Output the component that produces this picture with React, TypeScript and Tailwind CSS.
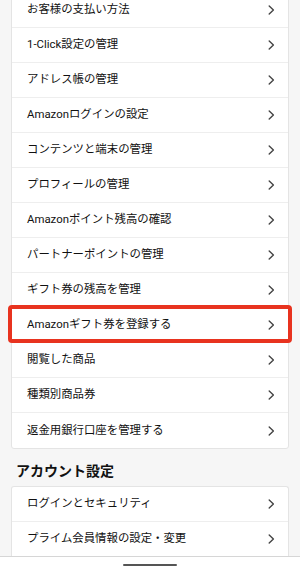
import React from "react";

const Chevron = () => (
  <svg width="7" height="10" viewBox="0 0 7 10" fill="none" className="shrink-0">
    <path d="M1.2 1 L5.4 5 L1.2 9" stroke="#444" strokeWidth="1.4" strokeLinecap="round" strokeLinejoin="round" />
  </svg>
);

const Row = ({ label, last }: { label: string; last?: boolean }) => (
  <div className={"flex h-[35px] items-center justify-between pl-[15px] pr-[13px] " + (last ? "" : "border-b border-[#eeeeee]")}>
    <span className="text-[11.4px] leading-none text-[#111111]">{label}</span>
    <Chevron />
  </div>
);

const items1 = [
  "お客様の支払い方法",
  "1-Click設定の管理",
  "アドレス帳の管理",
  "Amazonログインの設定",
  "コンテンツと端末の管理",
  "プロフィールの管理",
  "Amazonポイント残高の確認",
  "パートナーポイントの管理",
  "ギフト券の残高を管理",
  "Amazonギフト券を登録する",
  "閲覧した商品",
  "種類別商品券",
  "返金用銀行口座を管理する",
];

const items2 = ["ログインとセキュリティ", "プライム会員情報の設定・変更"];

export default function App() {
  return (
    <div
      className="relative h-[570px] w-[300px] overflow-hidden bg-[#f6f6f6]"
      style={{ fontFamily: 'Roboto, "Noto Sans CJK JP", sans-serif' }}
    >
      <div className="mx-[11px] -mt-[8px] overflow-hidden rounded-[3px] border border-[#e4e4e4] bg-white">
        {items1.map((t, i) => (
          <Row key={t} label={t} last={i === items1.length - 1} />
        ))}
      </div>
      <div className="flex h-[37px] items-center pl-[16px] pt-[6px]">
        <span className="text-[14px] font-bold leading-none text-[#111111]">アカウント設定</span>
      </div>
      <div className="mx-[11px] overflow-hidden rounded-t-[3px] border border-b-0 border-[#e4e4e4] bg-white">
        {items2.map((t) => (
          <Row key={t} label={t} />
        ))}
      </div>

      {/* red highlight annotation */}
      <div className="absolute left-[8px] top-[305px] h-[38px] w-[284px] rounded-[4px] border-[4px] border-[#e8331f]" />

      {/* bottom bar */}
      <div className="absolute bottom-0 left-0 flex h-[14px] w-full items-center justify-center border-t border-[#d6d6d6] bg-white">
        <div className="mt-[3px] h-[1.5px] w-[54px] rounded-full bg-[#555555]" />
      </div>
    </div>
  );
}
